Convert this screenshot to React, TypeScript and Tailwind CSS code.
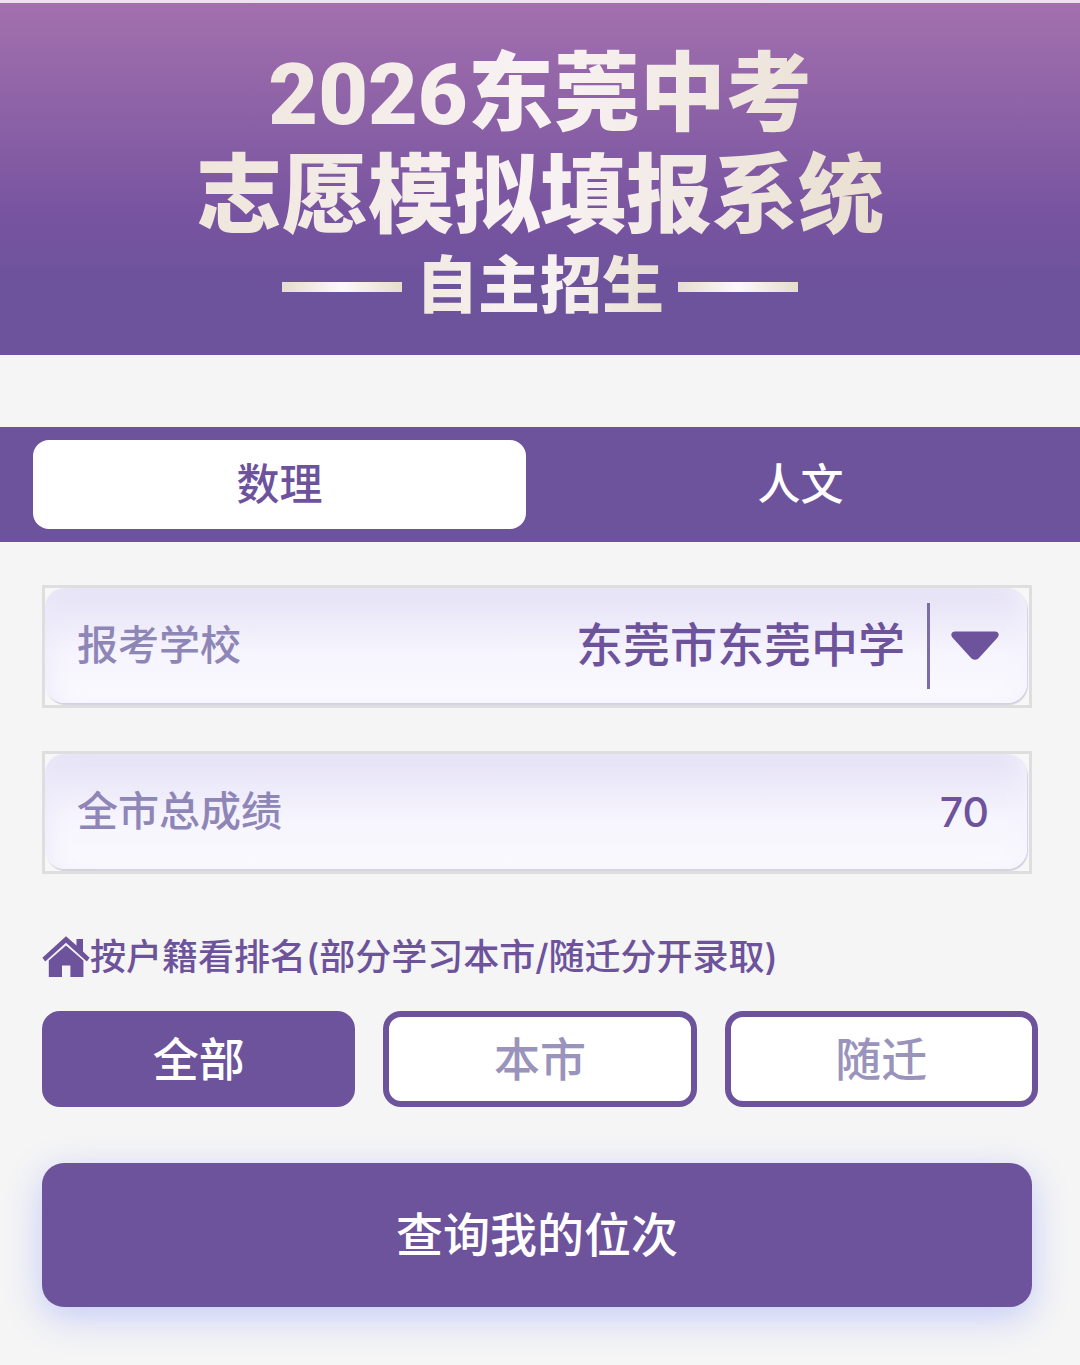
import { useState } from "react";

const tabs = ["数理", "人文"];
const regions = ["全部", "本市", "随迁"];
const schools = ["东莞市东莞中学", "东莞市东莞高级中学", "东莞市第一中学"];

function TitleLine() {
  return (
    <span className="h-[10px] w-[120px] bg-linear-to-r from-[#e6dccf] via-[#fdf8fa] to-[#e6dccf]" />
  );
}

function HouseIcon() {
  return (
    <svg viewBox="0 0 48 42" className="h-[42px] w-[48px] shrink-0" fill="#6d529c">
      <path d="M24 0.2 L34.5 9.6 V3 H41 V15.6 L47.6 21.8 L44.8 25.4 L24 6.8 L3.2 25.4 L0.4 21.8 Z" />
      <path d="M24 9.4 L41.4 24.6 V41 H28.4 V29.5 H20 V41 H6.8 V24.6 Z" />
    </svg>
  );
}

function ArrowIcon() {
  return (
    <svg viewBox="0 0 48 30" className="h-[30px] w-[48px]">
      <path
        d="M4 0.5 H44 C47.6 0.5 48.8 4 46.6 6.4 L28.4 26.6 C25.8 29.6 22.2 29.6 19.6 26.6 L1.4 6.4 C-0.8 4 0.4 0.5 4 0.5 Z"
        fill="#6d529c"
      />
    </svg>
  );
}

const fieldBox = "border-3 border-[#dedede] bg-[#f7f7f8] pr-[2px] pb-[2px]";
const fieldInner =
  "flex h-[115px] items-center rounded-[20px] bg-linear-to-b from-[#e5e1f6] via-[#f6f4fd] via-55% to-[#fbfafe] pl-8 shadow-[1px_2px_1px_#d3d1e0,inset_14px_0_24px_-12px_#ece9fa,inset_-14px_0_24px_-12px_#f4f2fd]";

export default function App() {
  const [tab, setTab] = useState("数理");
  const [region, setRegion] = useState("全部");
  const [school, setSchool] = useState(schools[0]);
  const [score, setScore] = useState("70");

  return (
    <div className="min-h-screen bg-[#f5f5f5] pb-[58px] font-[Inter,'Noto_Sans_CJK_SC',sans-serif] font-medium text-[#6d529c]">
      <header className="border-t-3 border-[#ebe4ef] bg-linear-to-b from-[#a370ad] via-[#7854a0] via-60% to-[#6d529c] to-80% pt-[41px] pb-[29px] font-[Roboto,'Noto_Sans_CJK_SC',sans-serif]">
        <h1 className="mx-auto w-fit bg-linear-to-r from-[#efe6dc] via-[#f8f2f3] to-[#e9dfd0] bg-clip-text text-center text-[86px] leading-[102px] font-black text-transparent">
          2026东莞中考
          <br />
          志愿模拟填报系统
        </h1>
        <div className="flex items-center justify-center gap-[14px]">
          <TitleLine />
          <h2 className="bg-linear-to-r from-[#f1e9e0] via-[#f9f3f5] to-[#e9dfd0] bg-clip-text text-[62px] leading-[78px] font-black text-transparent">
            自主招生
          </h2>
          <TitleLine />
        </div>
      </header>

      <nav className="mt-[72px] grid grid-cols-2 gap-7 bg-[#6d529c] px-[33px] py-[13px]">
        {tabs.map((t) => (
          <button
            key={t}
            onClick={() => setTab(t)}
            className={
              "h-[89px] rounded-2xl text-[43px] " +
              (tab === t ? "bg-white text-[#6d529c]" : "text-white")
            }
          >
            {t}
          </button>
        ))}
      </nav>

      <main className="pt-[43px] pr-[48px] pl-[42px]">
        <div className={fieldBox}>
          <div className={fieldInner}>
            <label htmlFor="school" className="text-[41px] text-[#8f86b8]">
              报考学校
            </label>
            <div className="relative ml-auto flex h-full items-center">
              <select
                id="school"
                value={school}
                onChange={(e) => setSchool(e.target.value)}
                className="h-full appearance-none bg-transparent pr-[122px] text-right text-[47px] outline-none"
              >
                {schools.map((s) => (
                  <option key={s}>{s}</option>
                ))}
              </select>
              <div className="pointer-events-none absolute right-[28px] flex items-center gap-[21px]">
                <span className="h-[86px] w-[3px] bg-[#7d6da6]" />
                <ArrowIcon />
              </div>
            </div>
          </div>
        </div>

        <div className={"mt-[43px] " + fieldBox}>
          <div className={fieldInner}>
            <label htmlFor="score" className="shrink-0 text-[41px] text-[#8f86b8]">
              全市总成绩
            </label>
            <input
              id="score"
              type="text"
              value={score}
              onChange={(e) => setScore(e.target.value)}
              className="h-full min-w-0 flex-1 bg-transparent pr-[38px] text-right text-[41px] outline-none"
            />
          </div>
        </div>

        <div className="mt-[56px] flex h-[54px] items-center text-[36px]">
          <HouseIcon />
          <p className="whitespace-nowrap">按户籍看排名(部分学习本市/随迁分开录取)</p>
        </div>
      </main>

      <div className="mt-[27px] grid grid-cols-3 gap-7 px-[42px]">
        {regions.map((r) => (
          <button
            key={r}
            onClick={() => setRegion(r)}
            className={
              "h-[96px] rounded-[18px] border-6 border-[#6d529c] text-[46px] " +
              (region === r ? "bg-[#6d529c] text-white" : "bg-white text-[#9a93bb]")
            }
          >
            {r}
          </button>
        ))}
      </div>

      <div className="mt-[56px] pr-[48px] pl-[42px]">
        <button className="h-[144px] w-full rounded-[22px] bg-[#6d529c] text-[47px] text-white shadow-[0_10px_36px_#5a6eff50]">
          查询我的位次
        </button>
      </div>
    </div>
  );
}
